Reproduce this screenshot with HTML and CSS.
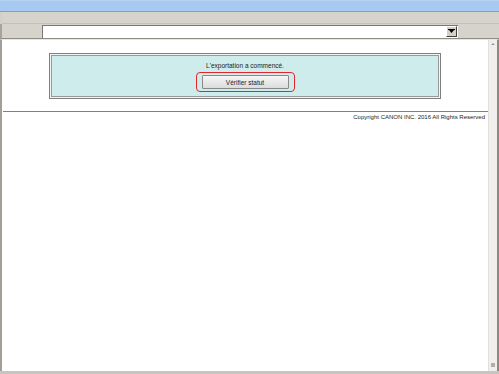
FILE: index.html
```html
<!DOCTYPE html>
<html>
<head>
<meta charset="utf-8">
<link rel="stylesheet" href="styles.css">
</head>
<body>
<div class="window">
  <div class="titlebar"></div>
  <div class="toolbar"></div>
  <div class="addressbar">
    <div class="select">
      <div class="select-field"></div>
      <div class="select-btn">
        <svg width="7" height="5" viewBox="0 0 7 5"><path d="M0 0H7V1H0ZM1 1H6L3.5 4Z" fill="#000"/></svg>
      </div>
    </div>
  </div>
  <div class="viewport">
    <div class="page">
      <div class="panel-wrap">
        <div class="panel">
          <div class="panel-inner">
            <p class="message">L'exportation a commencé.</p>
            <div class="highlight">
              <button class="btn">Vérifier statut</button>
            </div>
          </div>
        </div>
      </div>
      <hr class="rule">
      <p class="copyright">Copyright CANON INC. 2016 All Rights Reserved</p>
    </div>
    <div class="scrollbar">
      <span class="arrow-up"></span>
      <span class="grip"></span>
    </div>
  </div>
</div>
</body>
</html>
```

FILE: styles.css
```css
html, body {
  margin: 0;
  padding: 0;
  width: 499px;
  height: 374px;
  overflow: hidden;
  font-family: "Liberation Sans", Arial, sans-serif;
}
.window {
  width: 499px;
  height: 374px;
  box-sizing: border-box;
  display: flex;
  flex-direction: column;
  background: #d4d0c8;
  border-bottom: 3px solid #c9c5bd;
}
.titlebar {
  height: 12px;
  background: #a8caf0;
  border-top: 1px solid #b6d3f3;
  box-sizing: border-box;
  border-bottom: 1px solid #9d9a94;
  flex: none;
}
.toolbar {
  height: 12px;
  background: #d6d3cd;
  border-bottom: 1px solid #c4c1ba;
  box-sizing: border-box;
  margin: 0 0 0 2px;
  flex: none;
}
.addressbar {
  height: 15px;
  display: flex;
  align-items: center;
  padding-left: 40px;
  background: #d6d3cd;
  border-left: 2px solid #a8a49c;
  border-bottom: 1px solid #8f8c86;
  box-sizing: border-box;
  flex: none;
}
.select {
  width: 416px;
  height: 13px;
  display: flex;
  background: #fff;
  border-left: 1px solid #7a7772;
  border-top: 1px solid #7a7772;
  box-sizing: border-box;
}
.select-field {
  flex: 1;
}
.select-btn {
  width: 11px;
  height: 11px;
  margin: 0 1px 0 0;
  background: #d4d0c8;
  border: 1px solid #fff;
  border-right-color: #404040;
  border-bottom-color: #404040;
  box-sizing: border-box;
  display: flex;
  align-items: center;
  justify-content: center;
}
.select-btn svg { display: block; }
.viewport {
  flex: 1;
  display: flex;
  border-left: 2px solid #a39f98;
  border-right: 2px solid #8c8983;
  border-top: 1px solid #e8e6e2;
  background: #fff;
  min-height: 0;
}
.page {
  flex: 1;
  background: #fff;
  padding-top: 13px;
}
.panel-wrap {
  display: flex;
  justify-content: center;
}
.panel {
  width: 392px;
  border: 1px solid #7f7f7f;
  padding: 1px;
  background: #f4f4f4;
  box-sizing: border-box;
}
.panel-inner {
  background: #ceecec;
  border: 1px solid #9a9a9a;
  display: flex;
  flex-direction: column;
  align-items: center;
  padding: 6px 0 4px;
}
.message {
  margin: 0 0 2px;
  font-size: 6.5px;
  line-height: 8px;
  color: #222;
}
.highlight {
  border: 1.5px solid #e2262b;
  border-radius: 4px;
  padding: 2px 5px;
}
.btn {
  display: block;
  width: 87px;
  height: 14px;
  padding: 0;
  font-family: "Liberation Sans", Arial, sans-serif;
  font-size: 6.5px;
  color: #222;
  background: linear-gradient(#f6f6f6, #dcdcdc);
  border: 1px solid #8a8a8a;
  border-radius: 1px;
}
.rule {
  margin: 12px 0 0 1px;
  border: 0;
  border-top: 1px solid #808080;
  height: 0;
}
.copyright {
  margin: 1px 0 0;
  text-align: right;
  padding-right: 3px;
  font-size: 6px;
  line-height: 9px;
  color: #222;
}
.scrollbar {
  width: 8px;
  background: #f0efed;
  border-left: 1px solid #e2e0dc;
  display: flex;
  flex-direction: column;
  justify-content: space-between;
  align-items: center;
  padding: 3px 0 4px;
}
.arrow-up {
  width: 0;
  height: 0;
  border-left: 2px solid transparent;
  border-right: 2px solid transparent;
  border-bottom: 2px solid #9a9a9a;
}
.grip {
  width: 4px;
  height: 4px;
  background: #b0aea8;
}
```
